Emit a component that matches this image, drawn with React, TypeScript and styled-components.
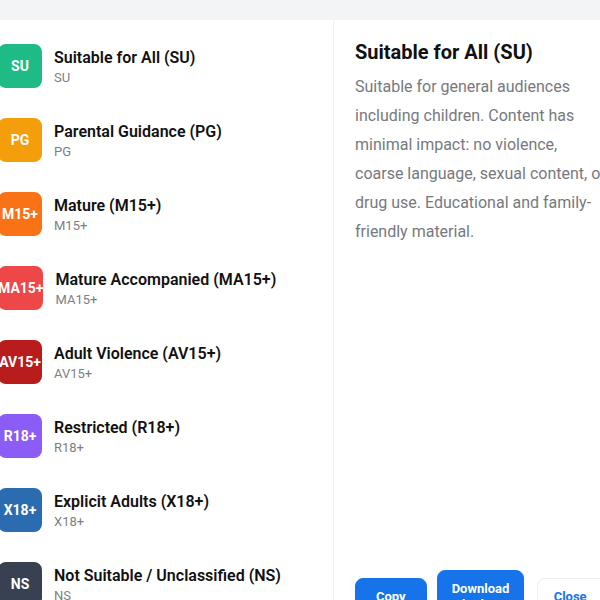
import React from "react";
import styled, { createGlobalStyle } from "styled-components";

const Global = createGlobalStyle`
  html, body { margin: 0; padding: 0; background: #ffffff; }
  body { font-family: Roboto, "Liberation Sans", Arial, sans-serif; overflow: hidden; }
  * { box-sizing: border-box; }
`;

const Page = styled.div`
  background: #f3f4f6;
  padding-top: 20px;
  width: 600px;
  height: 600px;
  overflow: hidden;
`;

const Dialog = styled.div`
  display: flex;
  background: #ffffff;
  margin-left: -18px;
  width: 700px;
`;

const List = styled.div`
  width: 352px;
  flex-shrink: 0;
  border-right: 1px solid #eef0f3;
  padding: 12px 0;
  display: flex;
  flex-direction: column;
  gap: 6px;
`;

const Row = styled.div`
  display: flex;
  align-items: center;
  gap: 12px;
  padding: 12px 16px;
`;

const Badge = styled.div<{ $bg: string }>`
  min-width: 44px;
  height: 44px;
  border-radius: 8px;
  background: ${(p) => p.$bg};
  color: #ffffff;
  font-size: 14px;
  font-weight: 700;
  display: flex;
  align-items: center;
  justify-content: center;
  white-space: nowrap;
`;

const Info = styled.div`
  display: flex;
  flex-direction: column;
  padding-top: 2px;
`;

const Name = styled.div`
  font-size: 16px;
  line-height: 21px;
  font-weight: 600;
  color: #111111;
`;

const Code = styled.div`
  margin-top: 1px;
  font-size: 13px;
  line-height: 18px;
  color: #7c7f85;
`;

const Detail = styled.div`
  padding: 20px 21px 6px;
  display: flex;
  flex-direction: column;
  width: 320px;
  flex-shrink: 0;
`;

const Title = styled.h2`
  margin: 0 0 8px;
  font-size: 20px;
  line-height: 24px;
  font-weight: 700;
  color: #111111;
`;

const Desc = styled.p`
  margin: 0;
  font-size: 16px;
  line-height: 29px;
  color: #77797e;
  width: 262px;
`;

const Footer = styled.div`
  margin-top: auto;
  display: flex;
  align-items: center;
  gap: 10px;
`;

const Button = styled.button<{ $variant?: "primary" | "secondary"; $pad?: number }>`
  font-family: Roboto, "Liberation Sans", Arial, sans-serif;
  font-size: 13px;
  font-weight: 700;
  line-height: 16px;
  padding: 10px ${(p) => p.$pad ?? 20}px;
  border-radius: 8px;
  cursor: pointer;
  text-align: center;
  border: 1px solid ${(p) => (p.$variant === "secondary" ? "#eceef1" : "#1673ea")};
  background: ${(p) => (p.$variant === "secondary" ? "#ffffff" : "#1673ea")};
  color: ${(p) => (p.$variant === "secondary" ? "#1673ea" : "#ffffff")};
`;

const DownloadButton = styled(Button)`
  width: 87px;
`;

const CloseButton = styled(Button)`
  margin-left: 3px;
  padding: 10px 16px;
  width: 80px;
  text-align: left;
`;

const ratings = [
  { code: "SU", name: "Suitable for All (SU)", color: "#1fbb86" },
  { code: "PG", name: "Parental Guidance (PG)", color: "#f59e0b" },
  { code: "M15+", name: "Mature (M15+)", color: "#f97316" },
  { code: "MA15+", name: "Mature Accompanied (MA15+)", color: "#ee4747" },
  { code: "AV15+", name: "Adult Violence (AV15+)", color: "#b91c1c" },
  { code: "R18+", name: "Restricted (R18+)", color: "#8b5cf6" },
  { code: "X18+", name: "Explicit Adults (X18+)", color: "#2b6cb0" },
  { code: "NS", name: "Not Suitable / Unclassified (NS)", color: "#374151" },
];

export default function App() {
  return (
    <>
      <Global />
      <Page>
        <Dialog>
          <List>
            {ratings.map((r) => (
              <Row key={r.code}>
                <Badge $bg={r.color}>{r.code}</Badge>
                <Info>
                  <Name>{r.name}</Name>
                  <Code>{r.code}</Code>
                </Info>
              </Row>
            ))}
          </List>
          <Detail>
            <Title>Suitable for All (SU)</Title>
            <Desc>
              Suitable for general audiences including children. Content has minimal impact: no
              violence,
              <br />
              coarse language, sexual content, or drug use. Educational and family-friendly
              material.
            </Desc>
            <Footer>
              <Button>Copy</Button>
              <DownloadButton $pad={14}>Download badge</DownloadButton>
              <CloseButton $variant="secondary">Close</CloseButton>
            </Footer>
          </Detail>
        </Dialog>
      </Page>
    </>
  );
}
